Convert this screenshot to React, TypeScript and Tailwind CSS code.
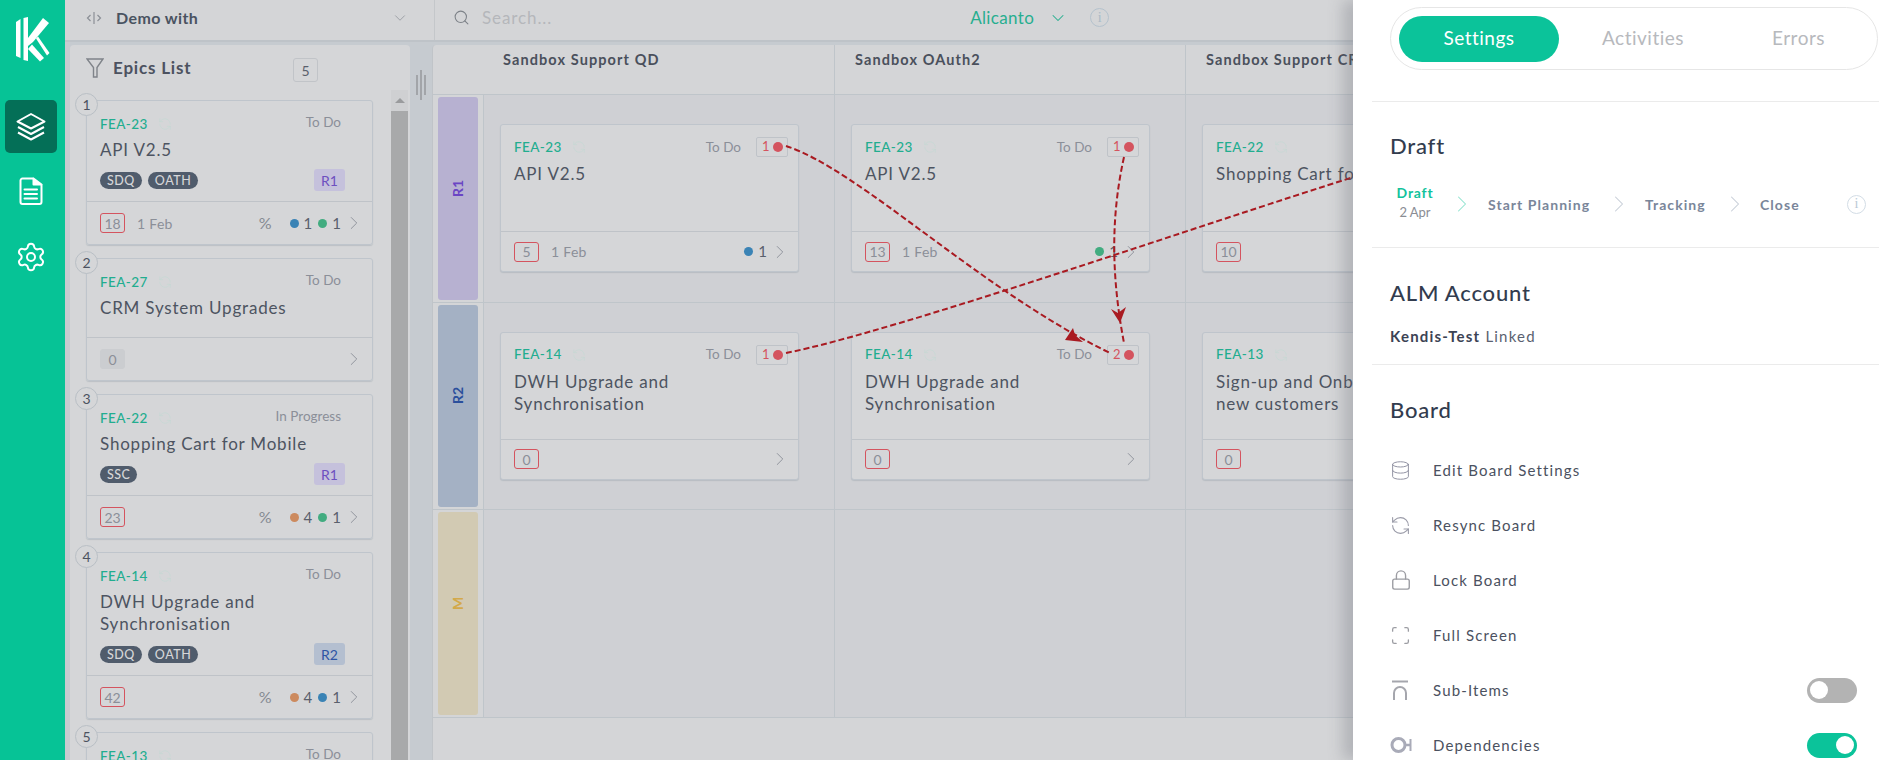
import React from 'react';
import { ChevronDown, ChevronRight, Database, Lock, RefreshCcw, Scan, Search, Settings } from 'lucide-react';

type Dot = { color: string; n: number };
type Epic = {
  num: number;
  key: string;
  status: string;
  title: string[];
  tags: string[];
  rel?: 'R1' | 'R2';
  points: number;
  date?: string;
  dots: Dot[];
  pct?: boolean;
  flat?: boolean;
};

const BLUE = '#3a83b5';
const GREEN = '#42ac80';
const ORANGE = '#cc8a5e';

const epics: Epic[] = [
  { num: 1, key: 'FEA-23', status: 'To Do', title: ['API V2.5'], tags: ['SDQ', 'OATH'], rel: 'R1', points: 18, date: '1 Feb', pct: true, dots: [{ color: BLUE, n: 1 }, { color: GREEN, n: 1 }] },
  { num: 2, key: 'FEA-27', status: 'To Do', title: ['CRM System Upgrades'], tags: [], points: 0, dots: [], flat: true },
  { num: 3, key: 'FEA-22', status: 'In Progress', title: ['Shopping Cart for Mobile'], tags: ['SSC'], rel: 'R1', points: 23, pct: true, dots: [{ color: ORANGE, n: 4 }, { color: GREEN, n: 1 }] },
  { num: 4, key: 'FEA-14', status: 'To Do', title: ['DWH Upgrade and', 'Synchronisation'], tags: ['SDQ', 'OATH'], rel: 'R2', points: 42, pct: true, dots: [{ color: ORANGE, n: 4 }, { color: BLUE, n: 1 }] },
  { num: 5, key: 'FEA-13', status: 'To Do', title: ['Sign-up and Onboarding'], tags: [], points: 0, dots: [] },
];

const columns = ['Sandbox Support QD', 'Sandbox OAuth2', 'Sandbox Support CRM'];

type BoardCardData = { key: string; title: string[]; points: number; date?: string; dot?: string; deps: number };

const boardRows: { label: string; band: string; text: string; cards: BoardCardData[] }[] = [
  {
    label: 'R1',
    band: 'bg-[#b7b1d1]',
    text: 'text-[#6a45c4]',
    cards: [
      { key: 'FEA-23', title: ['API V2.5'], points: 5, date: '1 Feb', dot: BLUE, deps: 1 },
      { key: 'FEA-23', title: ['API V2.5'], points: 13, date: '1 Feb', dot: GREEN, deps: 1 },
      { key: 'FEA-22', title: ['Shopping Cart for Mobile'], points: 10, deps: 1 },
    ],
  },
  {
    label: 'R2',
    band: 'bg-[#a4b1c4]',
    text: 'text-[#2a4f9c]',
    cards: [
      { key: 'FEA-14', title: ['DWH Upgrade and', 'Synchronisation'], points: 0, deps: 1 },
      { key: 'FEA-14', title: ['DWH Upgrade and', 'Synchronisation'], points: 0, deps: 2 },
      { key: 'FEA-13', title: ['Sign-up and Onboarding', 'new customers'], points: 0, deps: 1 },
    ],
  },
  { label: 'M', band: 'bg-[#d2cab3]', text: 'text-[#d3a94a]', cards: [] },
];

function InfoIcon({ border }: { border: string }) {
  return (
    <span className={`w-[19px] h-[19px] flex items-center justify-center rounded-full border-[1.5px] ${border} font-['Liberation_Serif',serif] text-[14px] leading-none`}>
      i
    </span>
  );
}

function Logo() {
  return (
    <svg width="36" height="46" viewBox="0 0 36 46" fill="white">
      <path d="M2 5L6.500 2V41L2 39Z" />
      <path d="M9.500 1L14 0V44L9.500 43Z" />
      <path d="M14 21L29 1L35 6L19 25L14 29Z" />
      <path d="M22 21.500L24 19.500L35.500 36L33 38.500Z" />
      <path d="M14 32L18 27.500L30 41L26 44.500Z" />
    </svg>
  );
}

function LayersIcon() {
  return (
    <svg width="30" height="30" viewBox="0 0 30 30" fill="none" stroke="white" strokeWidth="2" strokeLinejoin="round">
      <path d="M15 2L28.500 9.500L15 16.500L1.500 9.500Z" />
      <path d="M2 15L15 22L28 15" />
      <path d="M2 20.500L15 27.500L28 20.500" />
    </svg>
  );
}

function DocIcon() {
  return (
    <svg width="24" height="28" viewBox="0 0 24 28" fill="none" stroke="white" strokeWidth="2" strokeLinejoin="round" strokeLinecap="round">
      <path d="M14 1.500H3.500A2 2 0 0 0 1.500 3.500V25A2 2 0 0 0 3.500 27H20.500A2 2 0 0 0 22.500 25V8" />
      <path d="M14.500 1.500L22.500 7.500H14.500Z" fill="white" />
      <path d="M5.500 12.500H18M5.500 17H18M5.500 21.500H18" />
    </svg>
  );
}

function FunnelIcon() {
  return (
    <svg width="18" height="20" viewBox="0 0 18 20" fill="none" stroke="#7f8389" strokeWidth="1.400">
      <path d="M1 1H17L11 9.500V19H7.500V9.500Z" />
    </svg>
  );
}

function SplitIcon() {
  return (
    <svg width="16" height="12" viewBox="0 0 16 12" fill="none" stroke="#8b8f96" strokeWidth="1.200">
      <path d="M8 0V12" />
      <path d="M4.500 3L1.500 6L4.500 9M11.500 3L14.500 6L11.500 9" />
    </svg>
  );
}

function SubItemsIcon() {
  return (
    <svg width="20" height="21" viewBox="0 0 20 21" fill="none" stroke="#a5a6ad" strokeWidth="2">
      <path d="M2 1.500H18" />
      <path d="M4 20V13A6 6 0 0 1 16 13V20" />
    </svg>
  );
}

function DepsIcon() {
  return (
    <svg width="22" height="18" viewBox="0 0 22 18" fill="none" stroke="#a9abb8" strokeWidth="3">
      <circle cx="8.500" cy="9" r="6.500" />
      <path d="M15 9H20" strokeWidth="2.500" />
      <path d="M20.500 3V15" strokeWidth="2" />
    </svg>
  );
}

function Toggle({ on }: { on: boolean }) {
  return (
    <div className={`w-[50px] h-[25px] rounded-full flex items-center px-[3px] ${on ? 'bg-[#0bc39a] justify-end' : 'bg-[#b3b3b3] justify-start'}`}>
      <div className="w-[18px] h-[18px] rounded-full bg-white" />
    </div>
  );
}

function PointsBadge({ value, flat }: { value: number; flat?: boolean }) {
  return (
    <span className={`w-[25px] h-5 flex items-center justify-center rounded-[3px] text-[14px] text-[#8b8f98] border ${flat ? 'bg-[#cbcdd0] border-[#cbcdd0]' : 'border-[#d4545f]'}`}>
      {value}
    </span>
  );
}

function KeyRow({ code }: { code: string }) {
  return (
    <div className="flex items-center gap-[10px]">
      <span className="text-[13.500px] font-medium tracking-[0.4px] text-[#22ad8f]">{code}</span>
      <RefreshCcw size={14} strokeWidth={1.500} className="text-[#c8d8d5]" />
    </div>
  );
}

function EpicCard({ epic }: { epic: Epic }) {
  return (
    <div className="relative ml-[16px] mr-[18px] mb-[13px] rounded-[3px] border border-[#bfc5cc] shadow-[0_1px_1px_rgba(150,160,170,0.4)]">
      <span className="absolute -left-[12px] -top-[8px] w-[23px] h-[23px] rounded-full border border-[#b9bfc5] bg-[#d5d6d8] flex items-center justify-center text-[14px] text-[#4c5260]">
        {epic.num}
      </span>
      <div className={`px-[13px] pt-[13px] border-b border-[#bfc3c8] ${epic.tags.length ? 'pb-[10px]' : 'pb-[18px]'}`}>
        <div className="h-5 flex items-center justify-between pr-[18px]">
          <KeyRow code={epic.key} />
          <span className="text-[13.500px] text-[#8b8f98] -mt-[3px]">{epic.status}</span>
        </div>
        <div className="mt-[5px] text-[17px] leading-[22px] tracking-[0.8px] text-[#4d5461] whitespace-nowrap">
          {epic.title.map((line) => (
            <div key={line}>{line}</div>
          ))}
        </div>
        {epic.tags.length > 0 && (
          <div className="mt-2 h-[22px] flex items-center justify-between pr-[14px]">
            <div className="flex gap-[6px]">
              {epic.tags.map((tag) => (
                <span key={tag} className="h-[17px] px-[7px] rounded-full bg-[#505c6c] text-[#d5d6d8] text-[12.500px] leading-[17px] font-medium tracking-[0.5px]">
                  {tag}
                </span>
              ))}
            </div>
            {epic.rel && (
              <span className={`h-[22px] px-[7px] rounded-[3px] flex items-center text-[14px] ${epic.rel === 'R1' ? 'bg-[#c5c1dc] text-[#6d4fc0]' : 'bg-[#b4bfd0] text-[#2f55a4]'}`}>
                {epic.rel}
              </span>
            )}
          </div>
        )}
      </div>
      <div className="h-[42px] px-[13px] flex items-center">
        <PointsBadge value={epic.points} flat={epic.flat} />
        {epic.date && <span className="ml-3 text-[14px] tracking-[0.3px] text-[#8b8f98]">{epic.date}</span>}
        <div className="ml-auto flex items-center text-[#5a606c] text-[15px]">
          {epic.pct && <span className="mr-[18px] text-[#858a92] text-[16px]">%</span>}
          {epic.dots.map((dot, i) => (
            <span key={i} className="flex items-center gap-[5px] mr-[6px]">
              <span className="w-[9px] h-[9px] rounded-full" style={{ background: dot.color }} />
              {dot.n}
            </span>
          ))}
          <ChevronRight size={22} strokeWidth={1} className="text-[#8b8f98] -ml-[4px] -mr-[6px]" />
        </div>
      </div>
    </div>
  );
}

function BoardCard({ card }: { card: BoardCardData }) {
  return (
    <div className="w-[299px] h-[148px] rounded-[3px] bg-[#d5d6d8] border border-[#bfc5cc] shadow-[0_1px_1px_rgba(150,160,170,0.4)] flex flex-col">
      <div className="h-[107px] px-[13px] pt-[12px] border-b border-[#bfc3c8]">
        <div className="h-5 flex items-center justify-between -mr-[3px]">
          <KeyRow code={card.key} />
          <div className="flex items-center gap-[15px]">
            <span className="text-[13.500px] text-[#8b8f98]">To Do</span>
            <span className="w-8 h-5 pl-[5px] pr-[4px] flex items-center justify-between rounded-[2px] border border-[#bfc3c8] text-[13px] text-[#d4545f]">
              {card.deps}
              <span className="w-[10px] h-[10px] rounded-full bg-[#d4545f]" />
            </span>
          </div>
        </div>
        <div className="mt-[6px] text-[17px] leading-[22px] tracking-[0.8px] text-[#4d5461]">
          {card.title.map((line) => (
            <div key={line} className="whitespace-nowrap">{line}</div>
          ))}
        </div>
      </div>
      <div className="flex-1 px-[13px] flex items-center">
        <PointsBadge value={card.points} />
        {card.date && <span className="ml-3 text-[14px] tracking-[0.3px] text-[#8b8f98]">{card.date}</span>}
        <div className="ml-auto flex items-center text-[#5a606c] text-[15px]">
          {card.dot && (
            <span className="flex items-center gap-[5px] mr-[6px]">
              <span className="w-[9px] h-[9px] rounded-full" style={{ background: card.dot }} />
              1
            </span>
          )}
          <ChevronRight size={22} strokeWidth={1} className="text-[#8b8f98] -ml-[4px] -mr-[6px]" />
        </div>
      </div>
    </div>
  );
}

function Arrows() {
  return (
    <svg className="absolute left-0 top-0 pointer-events-none" width="1353" height="760" fill="none" stroke="#a91a21" strokeWidth="2" strokeDasharray="6 3">
      <path d="M786 146C860 170 980 290 1110 353" />
      <path d="M786 353C900 330 1200 225 1360 175" />
      <path d="M1124 157C1110 220 1112 280 1124 343" />
      <path d="M1083 342L1065 340L1073 328L1075 335Z" fill="#a91a21" stroke="none" />
      <path d="M1120 323L1111 309L1118 313L1126 307Z" fill="#a91a21" stroke="none" />
    </svg>
  );
}

const settings = [
  { label: 'Edit Board Settings', icon: <Database size={21} strokeWidth={1.100} className="text-[#8f90a0]" /> },
  { label: 'Resync Board', icon: <RefreshCcw size={21} strokeWidth={1.250} className="text-[#9a9ba8]" /> },
  { label: 'Lock Board', icon: <Lock size={22} strokeWidth={1.500} className="text-[#9c9da3]" /> },
  { label: 'Full Screen', icon: <Scan size={21} strokeWidth={1.500} className="text-[#9c9da3]" /> },
  { label: 'Sub-Items', icon: <SubItemsIcon />, toggle: false },
  { label: 'Dependencies', icon: <DepsIcon />, toggle: true },
];

function Drawer() {
  return (
    <aside className="absolute right-0 top-0 w-[539px] h-[760px] bg-white overflow-hidden shadow-[-10px_0_14px_rgba(90,95,105,0.28)]">
      <div className="ml-[37px] mt-[7px] w-[488px] h-[63px] rounded-full border border-[#e6e6e6] p-2 flex items-center text-[19px] tracking-[0.5px] text-[#b7b9bd]">
        <span className="w-[160px] h-[46px] shrink-0 rounded-full bg-[#0bc39a] text-white flex items-center justify-center">Settings</span>
        <span className="w-[168px] shrink-0 text-center">Activities</span>
        <span className="w-[143px] shrink-0 text-center">Errors</span>
      </div>
      <div className="ml-[19px] w-[507px] mt-[31px] h-[147px] border-y border-[#ebebeb]">
        <h2 className="ml-[18px] mt-[30px] text-[22px] leading-7 tracking-[0.8px] text-[#323c4e] font-medium">Draft</h2>
        <div className="ml-[25px] mt-[25px] flex items-center text-[14px] font-bold text-[#7a869a]">
          <div className="w-9 flex flex-col items-center tracking-[0.8px]">
            <span className="text-[#12c39c] leading-4">Draft</span>
            <span className="text-[13px] font-normal tracking-normal text-[#8a8d94] leading-[22px] whitespace-nowrap">2 Apr</span>
          </div>
          <ChevronRight size={28} strokeWidth={0.900} className="ml-[15px] text-[#8fe3cf]" />
          <span className="ml-3 w-[102px] whitespace-nowrap tracking-[1.05px]">Start Planning</span>
          <ChevronRight size={28} strokeWidth={0.900} className="ml-[15px] text-[#c5ccd6]" />
          <span className="ml-[12px] w-[61px] tracking-[1.05px]">Tracking</span>
          <ChevronRight size={28} strokeWidth={0.900} className="ml-[15px] text-[#c5ccd6]" />
          <span className="ml-[11px] w-[41px] tracking-[1.05px]">Close</span>
          <span className="ml-[46px] text-[#b9c9d6] font-normal"><InfoIcon border="border-[#d3dde6]" /></span>
        </div>
      </div>
      <div className="ml-[19px] w-[507px] h-[117px] pt-[31px] border-b border-[#ebebeb]">
        <h2 className="ml-[18px] text-[22px] leading-7 tracking-[0.8px] text-[#323c4e] font-medium">ALM Account</h2>
        <p className="ml-[18px] mt-[19px] text-[15px] leading-5 tracking-[1.2px] text-[#5a6170] whitespace-nowrap">
          <span className="font-bold text-[#3b4354]">Kendis-Test</span> Linked
        </p>
      </div>
      <div className="ml-[37px] mr-[35px]">
        <h2 className="mt-[31px] text-[22px] leading-7 tracking-[0.8px] text-[#323c4e] font-medium">Board</h2>
        <div className="mt-[31px] flex flex-col gap-[25px]">
          {settings.map((row) => (
            <div key={row.label} className="h-[30px] flex items-center text-[15px] tracking-[1.15px] text-[#4b5160]">
              <span className="w-[43px] flex items-center">{row.icon}</span>
              {row.label}
              {row.toggle !== undefined && (
                <span className="ml-auto"><Toggle on={row.toggle} /></span>
              )}
            </div>
          ))}
        </div>
      </div>
    </aside>
  );
}

export default function App() {
  return (
    <div className="relative h-screen w-full overflow-hidden flex bg-[#c6cbd0] font-['Lato',sans-serif]">
      <nav className="w-[65px] shrink-0 bg-[#06c396] flex flex-col items-center">
        <div className="mt-[17px] mr-[2px]"><Logo /></div>
        <div className="mt-[37px] w-[52px] h-[53px] rounded-[5px] bg-[#046f57] flex items-center justify-center -ml-[4px]">
          <LayersIcon />
        </div>
        <div className="mt-[24px] -ml-[4px]"><DocIcon /></div>
        <div className="mt-[36px] -ml-[4px]"><Settings size={32} strokeWidth={1.500} className="text-white" /></div>
      </nav>

      <main className="flex-1 min-w-0 flex flex-col">
        <header className="h-[42px] shrink-0 flex bg-[#d4d5d7] border-b-2 border-[#bec3c8]">
          <div className="w-[370px] border-r border-[#c4c7ca] flex items-center pl-[21px] pr-[25px] pb-[5px]">
            <SplitIcon />
            <span className="ml-[14px] text-[16px] font-bold tracking-[0.4px] text-[#4a5361]">Demo with</span>
            <ChevronDown size={18} strokeWidth={1.250} className="ml-auto text-[#9a9da3]" />
          </div>
          <div className="flex items-center pb-[5px]">
            <Search size={17} strokeWidth={1.500} className="ml-[18px] text-[#7d8288]" />
            <span className="ml-[12px] text-[17px] tracking-[0.9px] text-[#b5b7bb]">Search...</span>
            <span className="ml-[418px] text-[17px] tracking-[0.35px] text-[#27ae8f]">Alicanto</span>
            <ChevronDown size={20} strokeWidth={1.250} className="ml-[14px] text-[#27ae8f]" />
            <span className="ml-[22px] text-[#a9bac6]"><InfoIcon border="border-[#b4c2cd]" /></span>
          </div>
        </header>

        <div className="flex-1 min-h-0 flex pt-[3px]">
          <section className="w-[340px] ml-[5px] shrink-0 bg-[#d5d6d8] rounded-t-[4px] flex flex-col">
            <div className="h-[45px] shrink-0 pl-[16px] pt-[1px] flex items-center relative">
              <FunnelIcon />
              <span className="ml-[9px] text-[17px] font-bold tracking-[0.8px] text-[#4c5260]">Epics List</span>
              <span className="absolute left-[223px] top-[13px] w-[25px] h-[24px] rounded-[3px] border border-[#c1c4c8] flex items-center justify-center text-[14px] text-[#5a606c]">5</span>
            </div>
            <div className="flex-1 min-h-0 flex relative">
              <div className="flex-1 pt-[10px] overflow-hidden">
                {epics.map((epic) => (
                  <EpicCard key={epic.num} epic={epic} />
                ))}
              </div>
              <div className="w-[17px] mr-[2px] shrink-0 flex flex-col">
                <div className="h-[21px] bg-[#cfd0d2] flex items-center justify-center">
                  <div className="w-0 h-0 border-x-[5px] border-x-transparent border-b-[5px] border-b-[#9a9b9d]" />
                </div>
                <div className="flex-1 bg-[#a8a9aa]" />
              </div>
            </div>
          </section>

          <div className="w-[22px] shrink-0 flex items-start justify-center pt-[25px] gap-[2px]">
            <span className="w-[2px] h-5 mt-[5px] bg-[#a2a5a9]" />
            <span className="w-[2px] h-[30px] bg-[#a2a5a9]" />
            <span className="w-[2px] h-5 mt-[5px] bg-[#a2a5a9]" />
          </div>

          <section className="flex-1 min-w-0 bg-[#d4d5d7] rounded-tl-[4px] border-l border-[#c0c4c8] overflow-hidden">
            <div className="flex h-[49px] w-[1200px]">
              <div className="w-[50px] shrink-0" />
              {columns.map((col, i) => (
                <div key={col} className={`w-[351px] shrink-0 pl-[20px] pt-[4px] text-[14.500px] font-bold tracking-[1.1px] text-[#4a505c] ${i > 0 ? 'border-l border-[#bfc5ca]' : ''}`}>
                  {col}
                </div>
              ))}
            </div>
            {boardRows.map((row) => (
              <div key={row.label} className="flex h-[207.500px] w-[1200px] border-t border-[#bfc5ca]">
                <div className="w-[50px] shrink-0 pl-[5px] py-[2px] pr-[5px]">
                  <div className={`h-full rounded-[3px] flex items-center justify-center pb-5 ${row.band}`}>
                    <span className={`-rotate-90 text-[14px] font-bold ${row.text}`}>{row.label}</span>
                  </div>
                </div>
                {columns.map((col) => (
                  <div key={col} className="w-[351px] shrink-0 bg-[#cfd0d4] border-l border-[#bfc5ca] pl-[16px] pt-[29px]">
                    {row.cards[columns.indexOf(col)] && <BoardCard card={row.cards[columns.indexOf(col)]} />}
                  </div>
                ))}
              </div>
            ))}
            <div className="w-[1200px] border-t border-[#bfc5ca]" />
          </section>
        </div>
      </main>

      <Arrows />
      <Drawer />
    </div>
  );
}
